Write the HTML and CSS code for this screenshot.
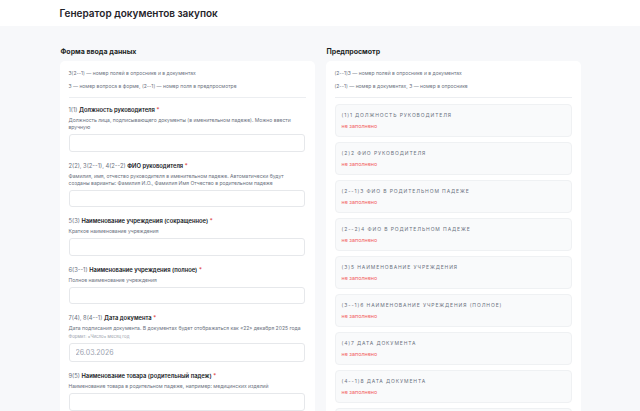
FILE: index.html
```html
<!DOCTYPE html>
<html lang="ru">
<head>
  <meta charset="utf-8">
  <title>Генератор документов закупок</title>
  <link rel="stylesheet" href="styles.css">
</head>
<body>
  <header class="topbar">
    <div class="wrap">
      <h1>Генератор документов закупок</h1>
    </div>
  </header>

  <main class="wrap columns">
    <!-- Форма -->
    <section>
      <h2>Форма ввода данных</h2>
      <div class="card">
        <div class="legend">
          <p>3(2--1) — номер полей в опроснике и в документах</p>
          <p>3 — номер вопроса в форме, (2--1) — номер поля в предпросмотре</p>
        </div>
        <div class="fields">
          <div class="field">
            <label>1(1) <b>Должность руководителя</b> <span class="req">*</span></label>
            <p class="hint">Должность лица, подписывающего документы (в именительном падеже). Можно ввести вручную</p>
            <input type="text">
          </div>
          <div class="field">
            <label>2(2), 3(2--1), 4(2--2) <b>ФИО руководителя</b> <span class="req">*</span></label>
            <p class="hint">Фамилия, имя, отчество руководителя в именительном падеже. Автоматически будут созданы варианты: Фамилия И.О., Фамилия Имя Отчество в родительном падеже</p>
            <input type="text">
          </div>
          <div class="field">
            <label>5(3) <b>Наименование учреждения (сокращенное)</b> <span class="req">*</span></label>
            <p class="hint">Краткое наименование учреждения</p>
            <input type="text">
          </div>
          <div class="field">
            <label>6(3--1) <b>Наименование учреждения (полное)</b> <span class="req">*</span></label>
            <p class="hint">Полное наименование учреждения</p>
            <input type="text">
          </div>
          <div class="field">
            <label>7(4), 8(4--1) <b>Дата документа</b> <span class="req">*</span></label>
            <p class="hint">Дата подписания документа. В документах будет отображаться как «22» декабря 2025 года</p>
            <p class="format">Формат: «Число» месяц год</p>
            <input type="text" class="date" placeholder="26.03.2026">
          </div>
          <div class="field">
            <label>9(5) <b>Наименование товара (родительный падеж)</b> <span class="req">*</span></label>
            <p class="hint">Наименование товара в родительном падеже, например: медицинских изделий</p>
            <input type="text">
          </div>
        </div>
      </div>
    </section>

    <!-- Предпросмотр -->
    <section>
      <h2>Предпросмотр</h2>
      <div class="card">
        <div class="legend">
          <p>(2--1)3 — номер полей в опроснике и в документах</p>
          <p>(2--1) — номер в документах, 3 — номер в опроснике</p>
        </div>
        <ul class="preview">
          <li><span class="name">(1)1 Должность руководителя</span><span class="empty">не заполнено</span></li>
          <li><span class="name">(2)2 ФИО руководителя</span><span class="empty">не заполнено</span></li>
          <li><span class="name">(2--1)3 ФИО в родительном падеже</span><span class="empty">не заполнено</span></li>
          <li><span class="name">(2--2)4 ФИО в родительном падеже</span><span class="empty">не заполнено</span></li>
          <li><span class="name">(3)5 Наименование учреждения</span><span class="empty">не заполнено</span></li>
          <li><span class="name">(3--1)6 Наименование учреждения (полное)</span><span class="empty">не заполнено</span></li>
          <li><span class="name">(4)7 Дата документа</span><span class="empty">не заполнено</span></li>
          <li><span class="name">(4--1)8 Дата документа</span><span class="empty">не заполнено</span></li>
          <li><span class="name">(5)9 Наименование товара</span><span class="empty">не заполнено</span></li>
        </ul>
      </div>
    </section>
  </main>
</body>
</html>
```

FILE: styles.css
```css
* {
    box-sizing: border-box;
}

body {
    margin: 0;
    background-color: #f7f8fa;
    font-family: Inter, "Noto Sans", sans-serif;
    color: #1b1f24;
}

.wrap {
    width: 521px;
    margin: 0 auto;
}

.topbar {
    background-color: #fff;
    height: 26px;
}

.topbar h1 {
    margin: 0;
    font-size: 10px;
    line-height: 26px;
    font-weight: 600;
    color: #1f2329;
}

.columns {
    display: grid;
    grid-template-columns: 1fr 1fr;
    column-gap: 11px;
    align-items: start;
    padding-top: 21px;
}

h2 {
    margin: 0 0 5px 1px;
    font-size: 7px;
    line-height: 9px;
    font-weight: 700;
    color: #1b1f24;
}

.card {
    background-color: #fff;
    border-radius: 5px;
    padding: 9px 9px 12px;
}

.legend {
    padding-bottom: 7px;
    border-bottom: 1px solid #eceef1;
}

.legend p {
    margin: 0 0 6px;
    font-size: 5px;
    line-height: 7px;
    color: #6b7280;
}

.legend p:last-child {
    margin-bottom: 0;
}

/* поля формы */
.fields {
    padding-top: 8px;
}

.field {
    display: flex;
    flex-direction: column;
    margin-bottom: 10px;
}

.field label {
    font-size: 5.8px;
    line-height: 8px;
    color: #6b7280;
}

.field label b {
    color: #15181d;
    font-weight: 600;
}

.req {
    color: #d92d2d;
}

.hint {
    margin: 3px 0 0;
    font-size: 5.05px;
    line-height: 7px;
    color: #6b7280;
}

.format {
    margin: 2px 0 0;
    font-size: 4.4px;
    line-height: 6px;
    color: #9aa1ab;
}

.field input {
    margin-top: 3px;
    width: 236px;
    height: 17.5px;
    border: 1px solid #e6e8eb;
    border-radius: 3px;
    background-color: #fff;
    font-family: inherit;
    font-size: 7px;
    padding: 0 6px;
}

.field input.date {
    height: 19px;
}

.field input::placeholder {
    color: #9ca3af;
}

/* предпросмотр */
.preview {
    list-style: none;
    margin: 0;
    padding: 6px 0 0;
    display: flex;
    flex-direction: column;
    gap: 5px;
}

.preview li {
    display: flex;
    flex-direction: column;
    gap: 4px;
    padding: 6.5px 6px;
    background-color: #f9fafb;
    border: 1px solid #eff1f3;
    border-radius: 4px;
}

.name {
    font-size: 5px;
    line-height: 7px;
    letter-spacing: 0.9px;
    text-transform: uppercase;
    color: #6b7280;
}

.empty {
    font-size: 5.4px;
    line-height: 7px;
    color: #f26060;
}
```
